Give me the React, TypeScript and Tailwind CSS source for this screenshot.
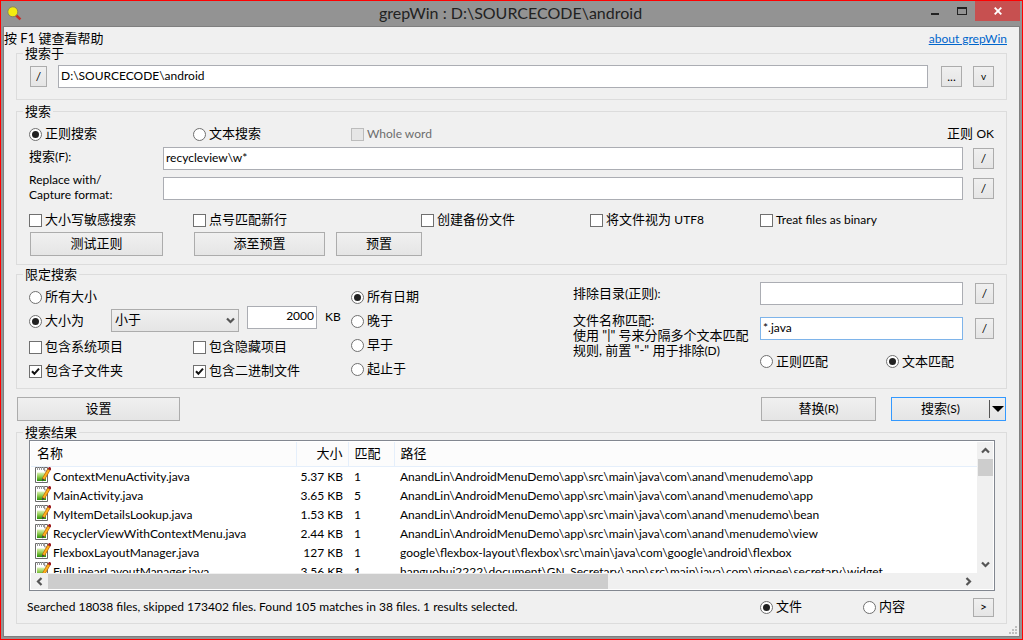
import React, { useState } from 'react';

const BTN =
  'flex shrink-0 items-center justify-center border border-[#acacac] bg-linear-to-b from-[#f0f0f0] to-[#e5e5e5] text-black';
const INPUT_BASE = 'h-[23px] min-w-0 border bg-white px-[2px] pb-[3px] text-xs text-black outline-none';
const INPUT = `${INPUT_BASE} border-[#abadb3]`;

interface ResultRow {
  name: string;
  size: string;
  matches: number;
  path: string;
}

const RESULTS: ResultRow[] = [
  { name: 'ContextMenuActivity.java', size: '5.37 KB', matches: 1, path: 'AnandLin\\AndroidMenuDemo\\app\\src\\main\\java\\com\\anand\\menudemo\\app' },
  { name: 'MainActivity.java', size: '3.65 KB', matches: 5, path: 'AnandLin\\AndroidMenuDemo\\app\\src\\main\\java\\com\\anand\\menudemo\\app' },
  { name: 'MyItemDetailsLookup.java', size: '1.53 KB', matches: 1, path: 'AnandLin\\AndroidMenuDemo\\app\\src\\main\\java\\com\\anand\\menudemo\\bean' },
  { name: 'RecyclerViewWithContextMenu.java', size: '2.44 KB', matches: 1, path: 'AnandLin\\AndroidMenuDemo\\app\\src\\main\\java\\com\\anand\\menudemo\\view' },
  { name: 'FlexboxLayoutManager.java', size: '127 KB', matches: 1, path: 'google\\flexbox-layout\\flexbox\\src\\main\\java\\com\\google\\android\\flexbox' },
  { name: 'FullLinearLayoutManager.java', size: '3.56 KB', matches: 1, path: 'hanguohui2222\\document\\GN_Secretary\\app\\src\\main\\java\\com\\gionee\\secretary\\widget' },
];

interface OptionProps {
  children: React.ReactNode;
  checked?: boolean;
  disabled?: boolean;
  latin?: boolean;
}

const Check: React.FC<OptionProps> = ({ children, checked = false, disabled = false, latin = false }) => (
  <label
    className={`flex items-center gap-[3px] whitespace-nowrap ${latin ? 'text-xs' : 'text-[13px]'} ${
      disabled ? 'text-[#6d6d6d]' : 'text-black'
    }`}
  >
    <span className="grid shrink-0">
      <input
        type="checkbox"
        defaultChecked={checked}
        disabled={disabled}
        className="peer col-start-1 row-start-1 size-[13px] appearance-none border border-[#707070] bg-white disabled:border-[#bcbcbc] disabled:bg-[#e6e6e6]"
      />
      <svg
        viewBox="0 0 13 13"
        className="pointer-events-none invisible col-start-1 row-start-1 size-[13px] peer-checked:visible"
        aria-hidden="true"
      >
        <path d="M3 6.2 5.4 8.8 10 3.6" fill="none" stroke="#111" strokeWidth="2" />
      </svg>
    </span>
    {children}
  </label>
);

interface RadioProps extends OptionProps {
  name: string;
}

const Radio: React.FC<RadioProps> = ({ children, name, checked = false }) => (
  <label className="flex items-center gap-[3px] text-[13px] whitespace-nowrap">
    <input
      type="radio"
      name={name}
      defaultChecked={checked}
      className="grid size-[13px] shrink-0 appearance-none place-items-center rounded-full border border-[#707070] bg-white checked:before:size-[7px] checked:before:rounded-full checked:before:bg-[#212121] checked:before:content-['']"
    />
    {children}
  </label>
);

const SlashButton: React.FC<{ label: string; narrow?: boolean }> = ({ label, narrow = false }) => (
  <button type="button" aria-label={label} className={`${BTN} h-[21px] text-xs ${narrow ? 'w-[19px]' : 'w-[21px]'}`}>
    /
  </button>
);

const Group: React.FC<{ title: string; className?: string; children: React.ReactNode }> = ({
  title,
  className = '',
  children,
}) => (
  <fieldset className={`min-w-0 border border-[#dcdcdc] ${className}`}>
    <legend className="relative -ml-1.5 bg-[#f0f0f0] px-0.5 text-[13px] leading-4">{title}</legend>
    {children}
  </fieldset>
);

const Chevron: React.FC<{ className?: string }> = ({ className = '' }) => (
  <svg viewBox="0 0 9 7" className={`h-[7px] w-[9px] ${className}`} aria-hidden="true">
    <path d="M1 1.5 4.5 5 8 1.5" fill="none" stroke="#555" strokeWidth="2.2" />
  </svg>
);

const FileIcon = () => (
  <svg viewBox="0 0 16 16" className="size-4 shrink-0" aria-hidden="true">
    <defs>
      <linearGradient id="page" x1="0" y1="0" x2="0" y2="1">
        <stop offset="0" stopColor="#dcf2b8" />
        <stop offset="0.5" stopColor="#8ecb4c" />
        <stop offset="1" stopColor="#2a8f0c" />
      </linearGradient>
    </defs>
    <path d="M.5.5h12v15H.5z" fill="#fff" stroke="#6a6a6a" />
    <path d="M2.5 0v3M4.5 0v3M6.5 0v3M8.5 0v3" stroke="#9a9a9a" />
    <path d="M9.5.5v3.5h3" fill="#eee" stroke="#999" />
    <path d="M2 5.5h9V14H2z" fill="url(#page)" />
    <path d="M14 2.4 8.4 12.2" stroke="#b5650a" strokeWidth="3.2" />
    <path d="M13.8 2.8 8.6 11.8" stroke="#ffb01e" strokeWidth="2" />
    <path d="M7 14.4 7.2 11.4 9.4 12.6z" fill="#444" />
    <path d="M13.4.8 16 2.3" stroke="#9d1c20" strokeWidth="2.6" />
  </svg>
);

const TitleBar = () => (
  <header className="flex h-[25px] shrink-0 items-start bg-[#939393]">
    <div className="flex w-[101px] shrink-0 pt-1 pl-1.5">
      <svg viewBox="0 0 16 16" className="size-4" aria-hidden="true">
        <path d="M8.8 10 13.4 14.4" stroke="#cb2d26" strokeWidth="2.6" />
        <circle cx="5.8" cy="6.8" r="5" fill="#f4ec10" stroke="#86835e" strokeWidth="1" />
      </svg>
    </div>
    <h1 className="min-w-0 flex-1 truncate text-center text-base leading-6 text-[#222]">
      grepWin : D:\SOURCECODE\android
    </h1>
    <div className="flex w-[103px] shrink-0 justify-end pr-0.5">
      <button type="button" aria-label="Minimize" className="flex h-5 w-[26px] justify-center pt-3">
        <span className="h-[2px] w-2 bg-[#222]" />
      </button>
      <button type="button" aria-label="Maximize" className="flex h-5 w-[27px] justify-center pt-1.5">
        <span className="h-2 w-2.5 border border-t-2 border-[#222]" />
      </button>
      <button type="button" aria-label="Close" className="flex h-5 w-[45px] items-center justify-center bg-[#c75050]">
        <svg viewBox="0 0 8 8" className="size-2" aria-hidden="true">
          <path d="M.7.7 7.3 7.3M7.3.7.7 7.3" stroke="#fff" strokeWidth="1.9" />
        </svg>
      </button>
    </div>
  </header>
);

const SearchGroup = () => (
  <Group title="搜索" className="mt-[3px] px-3 pb-2">
    <div className="flex h-[28px] pt-[7px]">
      <div className="flex h-4 w-[164px]">
        <Radio name="mode" checked>
          正则搜索
        </Radio>
      </div>
      <div className="flex h-4 w-[158px]">
        <Radio name="mode">文本搜索</Radio>
      </div>
      <div className="flex h-4">
        <Check disabled latin>
          Whole word
        </Check>
      </div>
      <span className="ml-auto text-[13px] leading-3">
        正则 <span className="text-xs">OK</span>
      </span>
    </div>
    <div className="grid grid-cols-[134px_1fr_31px] items-center gap-y-[5px]">
      <label htmlFor="pattern" className="self-start text-[13px] leading-[18px]">
        搜索<span className="text-xs">(F):</span>
      </label>
      <input id="pattern" className={INPUT} defaultValue="recycleview\w*" />
      <div className="ml-2.5">
        <SlashButton label="Edit search text" />
      </div>
      <label htmlFor="replace" className="-mt-[3px] text-xs leading-[15px]">
        Replace with/
        <br />
        Capture format:
      </label>
      <input id="replace" className={INPUT} />
      <div className="ml-2.5">
        <SlashButton label="Edit replace text" />
      </div>
    </div>
    <div className="mt-2 grid h-5 grid-cols-[164px_228px_169px_170px_1fr]">
      <Check>大小写敏感搜索</Check>
      <Check>点号匹配新行</Check>
      <Check>创建备份文件</Check>
      <Check>
        <span>
          将文件视为 <span className="text-xs">UTF8</span>
        </span>
      </Check>
      <Check latin>Treat files as binary</Check>
    </div>
    <div className="mt-0.5 flex pl-px text-[13px]">
      <button type="button" className={`${BTN} mr-[31px] h-6 w-[133px]`}>
        测试正则
      </button>
      <button type="button" className={`${BTN} mr-[11px] h-6 w-[131px]`}>
        添至预置
      </button>
      <button type="button" className={`${BTN} h-6 w-[86px]`}>
        预置
      </button>
    </div>
  </Group>
);

const LimitGroup = () => (
  <Group title="限定搜索" className="mt-px px-3 pb-[5px]">
    <div className="flex">
      <div className="w-[322px] shrink-0 pt-[3px]">
        <div className="flex h-6 items-center">
          <Radio name="size">所有大小</Radio>
        </div>
        <div className="flex h-6 items-center">
          <div className="w-[82px]">
            <Radio name="size" checked>
              大小为
            </Radio>
          </div>
          <div className="grid w-32 pb-0.5">
            <select
              aria-label="Size comparison"
              className="col-start-1 row-start-1 h-[23px] appearance-none border border-[#acacac] bg-linear-to-b from-[#f0f0f0] to-[#e5e5e5] px-[3px] text-[13px]"
            >
              <option>小于</option>
              <option>等于</option>
              <option>大于</option>
            </select>
            <Chevron className="pointer-events-none col-start-1 row-start-1 mr-1 self-center justify-self-end" />
          </div>
          <div className="flex items-center pb-2">
            <input aria-label="Size" className={`${INPUT} mx-2 w-[70px] text-right`} defaultValue="2000" />
            <span className="text-xs">KB</span>
          </div>
        </div>
        <div className="grid grid-cols-[164px_1fr] pt-0.5">
          <div className="flex h-6">
            <Check>包含系统项目</Check>
          </div>
          <div className="flex h-6">
            <Check>包含隐藏项目</Check>
          </div>
          <div className="flex h-6">
            <Check checked>包含子文件夹</Check>
          </div>
          <div className="flex h-6">
            <Check checked>包含二进制文件</Check>
          </div>
        </div>
      </div>
      <div className="w-[222px] shrink-0 pt-[3px]">
        <div className="flex h-6">
          <Radio name="date" checked>
            所有日期
          </Radio>
        </div>
        <div className="flex h-6">
          <Radio name="date">晚于</Radio>
        </div>
        <div className="flex h-6">
          <Radio name="date">早于</Radio>
        </div>
        <div className="flex h-6">
          <Radio name="date">起止于</Radio>
        </div>
      </div>
      <div className="grid flex-1 grid-cols-[187px_1fr_31px] content-start text-[13px]">
        <label htmlFor="exclude" className="leading-[22px]">
          排除目录<span className="text-xs">(</span>正则<span className="text-xs">):</span>
        </label>
        <input id="exclude" className={INPUT} />
        <div className="ml-3 pt-px">
          <SlashButton label="Edit excluded folders" narrow />
        </div>
        <label htmlFor="filenames" className="row-span-2 pt-2 leading-[15px] whitespace-nowrap">
          文件名称匹配:
          <br />
          使用 "|" 号来分隔多个文本匹配
          <br />
          规则, 前置 "-" 用于排除<span className="text-xs">(D)</span>
        </label>
        <input id="filenames" className={`${INPUT_BASE} mt-3 border-[#7eb4ea]`} defaultValue="*.java" />
        <div className="mt-3 ml-3 pt-px">
          <SlashButton label="Edit file names" narrow />
        </div>
        <div className="col-span-2 flex items-center pt-3">
          <div className="w-[126px]">
            <Radio name="match">正则匹配</Radio>
          </div>
          <Radio name="match" checked>
            文本匹配
          </Radio>
        </div>
      </div>
    </div>
  </Group>
);

const ResultTable = () => (
  <div className="flex min-h-24 flex-1 flex-col border border-[#828790] bg-white p-px">
    <div className="flex min-h-0 flex-1">
      <div className="min-h-0 flex-1 overflow-hidden">
        <table className="w-full table-fixed border-collapse text-left text-xs whitespace-nowrap">
          <colgroup>
            <col className="w-[265px]" />
            <col className="w-[52px]" />
            <col className="w-[46px]" />
            <col />
          </colgroup>
          <thead>
            <tr className="h-6 border-b border-[#e5effb] bg-[#fcfcfc] text-[13px]">
              <th className="border-r border-[#e5effb] p-0 pl-1.5 font-normal">名称</th>
              <th className="border-r border-[#e5effb] p-0 pr-[5px] text-right font-normal">大小</th>
              <th className="border-r border-[#e5effb] p-0 pl-1.5 font-normal">匹配</th>
              <th className="p-0 pl-1.5 font-normal">路径</th>
            </tr>
          </thead>
          <tbody>
            {RESULTS.map((row) => (
              <tr key={row.name} className="h-[19px] leading-[19px]">
                <td className="p-0 pl-1">
                  <div className="flex h-[19px] items-start gap-0.5">
                    <FileIcon />
                    {row.name}
                  </div>
                </td>
                <td className="p-0 pr-[5px] text-right">{row.size}</td>
                <td className="p-0 pl-1.5">{row.matches}</td>
                <td className="p-0 pl-1.5">{row.path}</td>
              </tr>
            ))}
          </tbody>
        </table>
      </div>
      <div className="flex w-4 shrink-0 flex-col items-center bg-[#f0f0f0]">
        <div className="flex h-[17px] items-center">
          <Chevron className="rotate-180" />
        </div>
        <div className="h-[17px] w-[15px] bg-[#cdcdcd]" />
        <div className="mt-auto flex h-[17px] items-center">
          <Chevron />
        </div>
      </div>
    </div>
    <div className="flex h-4 shrink-0 items-center bg-[#f0f0f0] pr-4">
      <div className="flex w-[17px] justify-center">
        <Chevron className="rotate-90" />
      </div>
      <div className="flex h-[15px] flex-1">
        <div className="w-[61.4%] bg-[#cdcdcd]" />
      </div>
      <div className="flex w-[17px] justify-center">
        <Chevron className="-rotate-90" />
      </div>
    </div>
  </div>
);

export default function App() {
  const [target, setTarget] = useState('D:\\SOURCECODE\\android');

  return (
    <div className="flex h-screen flex-col overflow-hidden border border-[#f00] bg-[#939393] font-[Lato,'Noto_Sans_CJK_SC',sans-serif] text-black">
      <TitleBar />
      <main className="mx-0.5 mb-0.5 flex min-h-0 flex-1 flex-col border border-[#7f7f7f] bg-[#f0f0f0]">
        <div className="flex h-[18px] shrink-0 justify-between pr-3">
          <span className="text-[13px] leading-[22px]">按 F1 键查看帮助</span>
          <a href="#about" className="text-xs leading-6 text-[#0066cc] underline">
            about grepWin
          </a>
        </div>
        <div className="flex min-h-0 flex-1 flex-col px-3 pb-3">
          <Group title="搜索于" className="px-3 pb-[11px]">
            <div className="flex items-center pt-1 pl-px">
              <button type="button" aria-label="Edit folders" className={`${BTN} mr-[11px] h-[21px] w-[17px] text-xs`}>
                /
              </button>
              <input
                aria-label="搜索于"
                className={`${INPUT} flex-1`}
                value={target}
                onChange={(e) => setTarget(e.target.value)}
              />
              <button type="button" className={`${BTN} mr-[11px] ml-[13px] h-[21px] w-[21px] text-xs`}>
                ...
              </button>
              <button type="button" className={`${BTN} h-[21px] w-[21px] text-[10px]`}>
                v
              </button>
            </div>
          </Group>
          <SearchGroup />
          <LimitGroup />
          <div className="mt-2 flex shrink-0 px-px text-[13px]">
            <button type="button" className={`${BTN} mr-auto h-6 w-[163px]`}>
              设置
            </button>
            <button type="button" className={`${BTN} mr-[15px] h-6 w-[115px]`}>
              <span>
                替换<span className="text-xs">(R)</span>
              </span>
            </button>
            <div className="flex h-6 w-[115px] border border-[#3399ff] bg-linear-to-b from-[#f0f0f0] to-[#e5e5e5]">
              <button type="button" className="flex-1">
                搜索<span className="text-xs">(S)</span>
              </button>
              <button
                type="button"
                aria-label="More search options"
                className="my-0.5 flex w-4 items-center justify-center border-l border-[#555]"
              >
                <svg viewBox="0 0 12 6" className="h-1.5 w-3" aria-hidden="true">
                  <path d="M0 0h12L6 6z" />
                </svg>
              </button>
            </div>
          </div>
          <Group title="搜索结果" className="mt-[3px] flex min-h-0 flex-1 flex-col pr-[11px] pb-1.5 pl-3">
            <ResultTable />
            <div className="mt-1.5 flex h-5 shrink-0 items-center pr-px">
              <output className="-ml-0.5 w-[733px] shrink text-xs whitespace-nowrap">
                Searched 18038 files, skipped 173402 files. Found 105 matches in 38 files. 1 results selected.
              </output>
              <div className="w-[103px]">
                <Radio name="view" checked>
                  文件
                </Radio>
              </div>
              <Radio name="view">内容</Radio>
              <button type="button" className={`${BTN} ml-auto h-[19px] w-[21px] text-xs`}>
                &gt;
              </button>
            </div>
          </Group>
        </div>
        <svg
          viewBox="0 0 8 8"
          className="pointer-events-none absolute right-1.5 bottom-1.5 size-2 fill-[#bfbfbf]"
          aria-hidden="true"
        >
          <path d="M6 0h2v2H6zM3 3h2v2H3zM6 3h2v2H6zM0 6h2v2H0zM3 6h2v2H3zM6 6h2v2H6z" />
        </svg>
      </main>
    </div>
  );
}
